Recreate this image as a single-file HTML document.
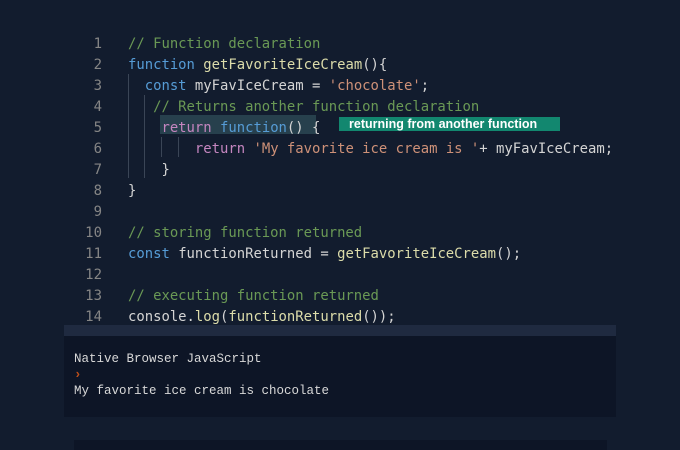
<!DOCTYPE html>
<html><head><style>
body{margin:0;width:680px;height:450px;background:#121c2e;overflow:hidden;position:relative;font-family:"DejaVu Sans Mono","Liberation Mono",monospace;}
.ln{position:absolute;left:60px;width:42px;text-align:right;color:#858585;font-size:14px;line-height:21px;}
.code{position:absolute;left:128px;color:#d4d4d4;font-size:13.9px;line-height:21px;white-space:pre;}
.c{color:#6a9955}.k{color:#569cd6}.f{color:#dcdcaa}.s{color:#ce9178}.r{color:#c586c0}
.g{position:absolute;width:1px;background:#3a4556}
</style></head><body>
<div style="position:absolute;left:160px;top:115px;width:156px;height:19px;background:#27404d"></div>
<div class="g" style="left:128px;top:74px;height:104px"></div>
<div class="g" style="left:144px;top:95px;height:83px"></div>
<div class="g" style="left:161px;top:137px;height:20px"></div>
<div class="g" style="left:178px;top:137px;height:20px"></div>
<div class="ln" style="top:34px">1<br>2<br>3<br>4<br>5<br>6<br>7<br>8<br>9<br>10<br>11<br>12<br>13<br>14</div>
<div class="code" style="top:34px"><span class="c">// Function declaration</span>
<span class="k">function</span> <span class="f">getFavoriteIceCream</span>(){
  <span class="k">const</span> myFavIceCream = <span class="s">'chocolate'</span>;
   <span class="c">// Returns another function declaration</span>
    <span class="r">return</span> <span class="k">function</span>() {
        <span class="r">return</span> <span class="s">'My favorite ice cream is '</span>+ myFavIceCream;
    }
}

<span class="c">// storing function returned</span>
<span class="k">const</span> functionReturned = <span class="f">getFavoriteIceCream</span>();

<span class="c">// executing function returned</span>
console.<span class="f">log</span>(<span class="f">functionReturned</span>());</div>
<div style="position:absolute;left:339px;top:117px;width:221px;height:14px;background:#12876f;color:#fff;font:bold 12.5px/14px 'Liberation Sans',sans-serif;padding-left:10px;box-sizing:border-box;white-space:nowrap">returning from another function</div>
<div style="position:absolute;left:64px;top:325px;width:552px;height:11px;background:#1f2a40"></div>
<div style="position:absolute;left:64px;top:336px;width:552px;height:81px;background:#0d1526"></div>
<div style="position:absolute;left:74px;top:351px;color:#d8d8d8;font:12.5px/16px 'Liberation Mono',monospace;white-space:pre">Native Browser JavaScript
<span style="color:#c0501a;font-weight:bold">›</span>
My favorite ice cream is chocolate</div>
<div style="position:absolute;left:74px;top:440px;width:533px;height:10px;background:#0d1526"></div>
</body></html>
